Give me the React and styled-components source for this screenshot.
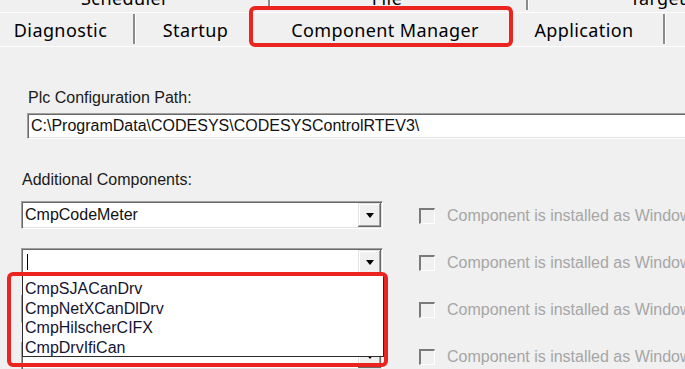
import React from 'react';
import styled, { createGlobalStyle } from 'styled-components';

const Global = createGlobalStyle`
  html, body { margin: 0; padding: 0; background: #f0f0f0; overflow: hidden; }
  body { width: 685px; height: 369px; }
`;

const Screen = styled.div`
  position: relative;
  width: 685px;
  height: 369px;
  overflow: hidden;
  background: #f0f0f0;
  font-family: "Liberation Sans", Arial, sans-serif;
`;

const TabRow = styled.div`
  display: flex;
  align-items: flex-end;
  height: ${p => p.$h}px;
  overflow: hidden;
  margin-left: ${p => p.$offset}px;
  border-top: ${p => (p.$line ? '1px solid #ffffff' : 'none')};
  box-sizing: border-box;
`;

const Tab = styled.div`
  position: relative;
  flex: none;
  box-sizing: border-box;
  width: ${p => p.$w}px;
  height: ${p => p.$th}px;
  padding-right: ${p => p.$pr || 0}px;
  display: flex;
  align-items: center;
  justify-content: center;
  font-family: "Noto Sans", sans-serif;
  font-size: 18px;
  letter-spacing: 0.4px;
  color: #000;
  white-space: nowrap;
  &::after {
    content: '';
    display: ${p => (p.$sep ? 'block' : 'none')};
    position: absolute;
    right: 0;
    top: 1px;
    bottom: 2px;
    width: 2px;
    background: #8c8c8c;
    box-shadow: 1px 0 #ffffff;
  }
`;

const Panel = styled.div`
  border-top: 1px solid #ffffff;
  padding-top: 42px;
`;

const Label = styled.div`
  font-size: 16px;
  line-height: 18px;
  color: #1a1a1a;
  margin-left: ${p => p.$x}px;
`;

const PathInput = styled.div`
  margin: 6px 0 0 27px;
  width: 720px;
  height: 26px;
  box-sizing: border-box;
  background: #fff;
  border-top: 1px solid #a0a0a0;
  border-left: 1px solid #a0a0a0;
  border-bottom: 1px solid #ffffff;
  box-shadow: inset 1px 1px #696969, inset 0 -1px #e3e3e3;
  padding: 2px 0 0 3px;
  font-size: 16px;
  line-height: 20px;
  color: #111;
`;

const Section = styled.div`
  margin-top: 32px;
`;

const Rows = styled.div`
  display: flex;
  flex-direction: column;
  gap: 19px;
  margin: 12px 0 0 21px;
`;

const Row = styled.div`
  display: flex;
  align-items: center;
`;

const Combo = styled.div`
  position: relative;
  flex: none;
  width: 362px;
  height: 28px;
  box-sizing: border-box;
  display: flex;
  background: #fff;
  border-top: 1px solid #a0a0a0;
  border-left: 1px solid #a0a0a0;
  border-right: 1px solid #ffffff;
  border-bottom: 1px solid #ffffff;
  box-shadow: inset 1px 1px #696969, inset -1px -1px #e3e3e3;
  padding: 1px;
`;

const ComboText = styled.div`
  flex: 1;
  padding-left: 2px;
  font-size: 16px;
  line-height: 24px;
  color: #111;
  display: flex;
  align-items: center;
`;

const Caret = styled.span`
  display: block;
  width: 1px;
  height: 16px;
  background: #000;
  margin-left: 2px;
`;

const DropButton = styled.div`
  flex: none;
  width: 23px;
  background: #f0f0f0;
  box-shadow: inset -1px -1px #696969, inset 1px 1px #e3e3e3, inset -2px -2px #a0a0a0, inset 2px 2px #ffffff;
  display: flex;
  align-items: center;
  justify-content: center;
`;

const Arrow = styled.span`
  width: 0;
  height: 0;
  border-left: 4.5px solid transparent;
  border-right: 4.5px solid transparent;
  border-top: 5px solid #000;
  margin-top: 1px;
`;

const CheckArea = styled.div`
  display: flex;
  align-items: center;
  margin-left: 36px;
  margin-top: 2px;
  gap: 12px;
  white-space: nowrap;
`;

const CheckBox = styled.span`
  flex: none;
  width: 16px;
  height: 16px;
  box-sizing: border-box;
  background: #f0f0f0;
  border-top: 2px solid #7a7a7a;
  border-left: 2px solid #7a7a7a;
  border-right: 1px solid #ffffff;
  border-bottom: 1px solid #ffffff;
`;

const CheckText = styled.span`
  font-size: 16px;
  color: #a6a6a6;
`;

const DropList = styled.div`
  position: absolute;
  left: 0;
  top: 100%;
  width: 362px;
  height: 82px;
  box-sizing: border-box;
  background: #fff;
  border: 1px solid #2b2b2b;
  padding: 3px 0 0 2px;
  z-index: 2;
`;

const ListItem = styled.div`
  font-size: 16px;
  line-height: 19.5px;
  height: 19.5px;
  color: #141432;
`;

const Highlight = styled.div`
  position: absolute;
  box-sizing: border-box;
  border: 4px solid #ec2420;
  border-radius: 6px;
  pointer-events: none;
  z-index: 5;
`;

const topTabs = [
  { label: 'Scheduler', w: 290, sep: true },
  { label: 'File', w: 258, sep: true, pr: 24 },
  { label: 'Target', w: 260 },
];

const bottomTabs = [
  { label: 'Diagnostic', w: 149, sep: true },
  { label: 'Startup', w: 121, pr: -2 },
  { label: 'Component Manager', w: 258 },
  { label: 'Application', w: 151, sep: true, pr: 11 },
  { label: '', w: 120 },
];

const items = ['CmpSJACanDrv', 'CmpNetXCanDlDrv', 'CmpHilscherCIFX', 'CmpDrvIfiCan'];

const rows = [
  { value: 'CmpCodeMeter' },
  { caret: true, open: true },
  {},
  {},
];

export default function App() {
  return (
    <Screen>
      <Global />
      <TabRow $h={12} $offset={-20}>
        {topTabs.map(t => (
          <Tab key={t.label} $w={t.w} $th={28} $sep={t.sep} $pr={t.pr}>{t.label}</Tab>
        ))}
      </TabRow>
      <TabRow $h={34} $offset={-14} $line>
        {bottomTabs.map((t, i) => (
          <Tab key={i} $w={t.w} $th={33} $sep={t.sep} $pr={t.pr}>{t.label}</Tab>
        ))}
      </TabRow>
      <Panel>
        <Label $x={28}>Plc Configuration Path:</Label>
        <PathInput>C:\ProgramData\CODESYS\CODESYSControlRTEV3\</PathInput>
        <Section>
          <Label $x={22}>Additional Components:</Label>
          <Rows>
            {rows.map((r, i) => (
              <Row key={i}>
                <Combo>
                  <ComboText>{r.caret ? <Caret /> : r.value}</ComboText>
                  <DropButton><Arrow /></DropButton>
                  {r.open && (
                    <DropList>
                      {items.map(it => <ListItem key={it}>{it}</ListItem>)}
                    </DropList>
                  )}
                </Combo>
                <CheckArea>
                  <CheckBox />
                  <CheckText>Component is installed as Windows service</CheckText>
                </CheckArea>
              </Row>
            ))}
          </Rows>
        </Section>
      </Panel>
      <Highlight style={{ left: 249, top: 6, width: 264, height: 41 }} />
      <Highlight style={{ left: 7, top: 272, width: 381, height: 95 }} />
    </Screen>
  );
}
